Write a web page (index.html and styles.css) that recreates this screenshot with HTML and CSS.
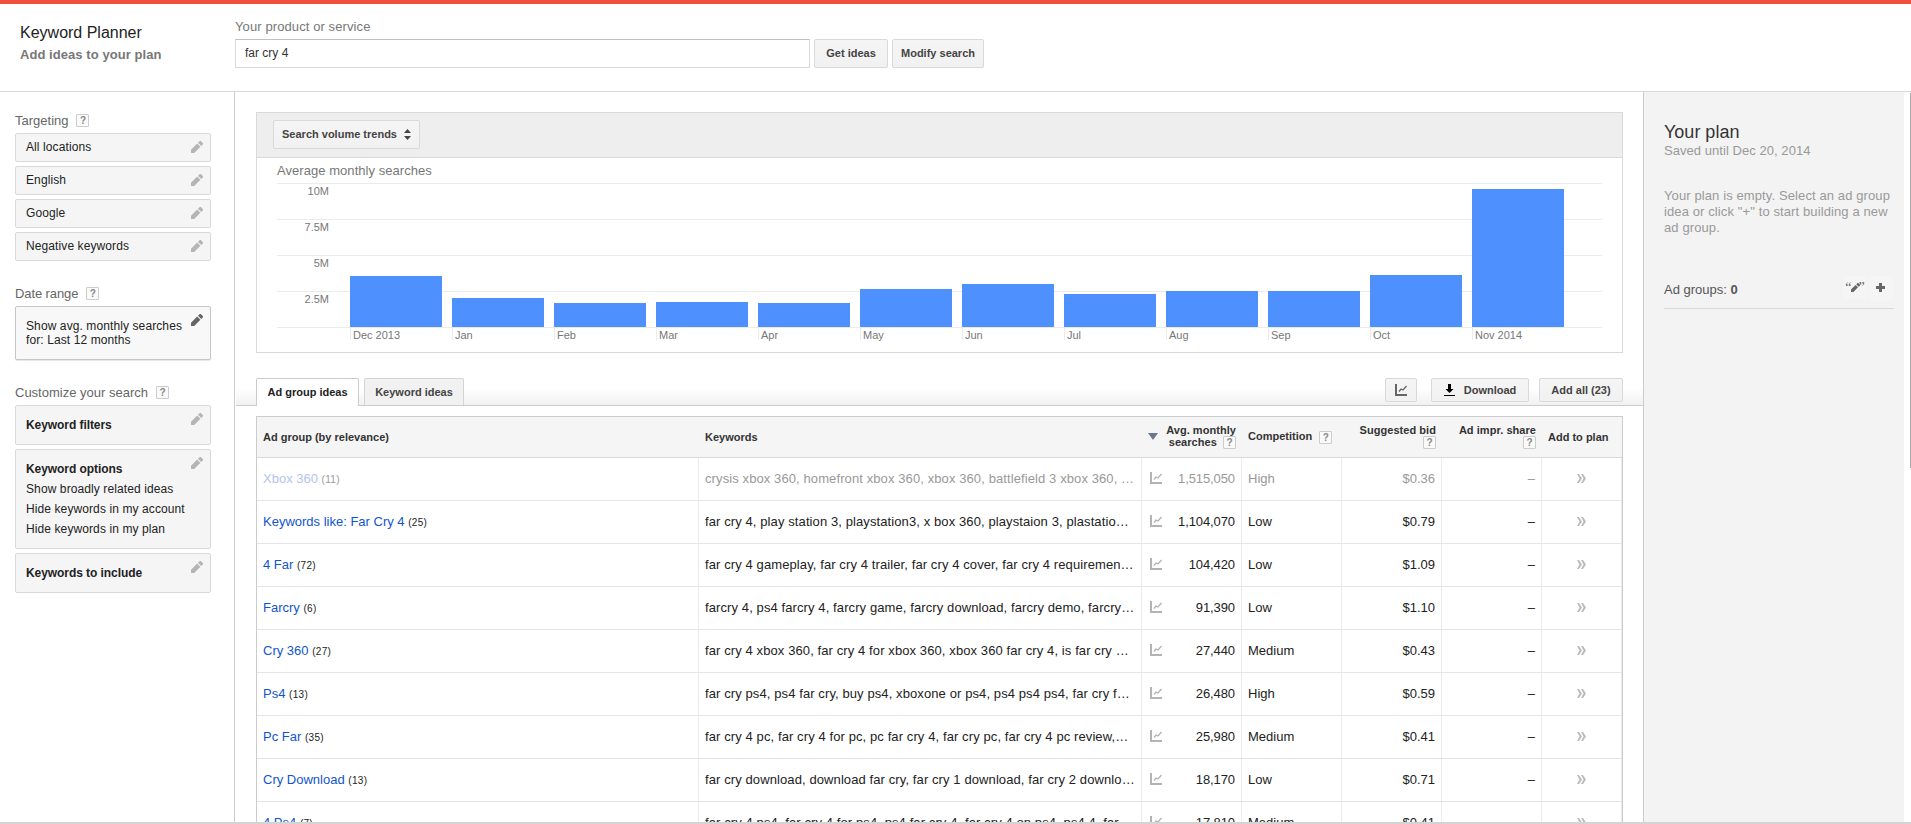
FILE: index.html
```html
<!DOCTYPE html>
<html lang="en">
<head>
    <meta charset="UTF-8">
    <meta name="viewport" content="width=device-width, initial-scale=1.0">
    <title>Keyword Planner</title>
    <link rel="stylesheet" href="styles.css">
</head>
<body>
    <svg class="sprite" xmlns="http://www.w3.org/2000/svg">
        <symbol id="pencil" viewBox="0 0 12 12">
            <path d="M0 12V8.800L6.200 2.600l3.200 3.200L3.200 12zM7 1.800L8.800 0h1L12 2.200v1L10.200 5z"/>
        </symbol>
        <symbol id="chart" viewBox="0 0 12 12">
            <path d="M0 0h2v10h10v2H0z"/>
            <path d="M4 7.5l2-2.5 2 1 3.5-4" fill="none" stroke="currentColor" stroke-width="1.3"/>
        </symbol>
        <symbol id="chevrons" viewBox="0 0 9 9">
            <path d="M0 0h2l3 4.5L2 9H0l2.5-4.5zM4 0h2l3 4.5L6 9H4l2.5-4.5z"/>
        </symbol>
    </svg>

    <header class="header">
        <div class="title">
            <h1>Keyword Planner</h1>
            <h2>Add ideas to your plan</h2>
        </div>
        <div class="search">
            <label for="product">Your product or service</label>
            <div class="search-row">
                <input type="text" id="product" value="far cry 4">
                <button class="button get-ideas">Get ideas</button>
                <button class="button modify">Modify search</button>
            </div>
        </div>
    </header>

    <div class="page">
        <aside class="sidebar">
            <h3>Targeting <span class="help">?</span></h3>
            <div class="option">All locations<svg class="pencil"><use href="#pencil"/></svg></div>
            <div class="option">English<svg class="pencil"><use href="#pencil"/></svg></div>
            <div class="option">Google<svg class="pencil"><use href="#pencil"/></svg></div>
            <div class="option">Negative keywords<svg class="pencil"><use href="#pencil"/></svg></div>

            <h3 class="date">Date range <span class="help">?</span></h3>
            <div class="option option-date">Show avg. monthly searches<br>for: Last 12 months<svg class="pencil"><use href="#pencil"/></svg></div>

            <h3>Customize your search <span class="help">?</span></h3>
            <div class="option option-big"><b>Keyword filters</b><svg class="pencil"><use href="#pencil"/></svg></div>
            <div class="option option-big">
                <b>Keyword options</b>
                <p>Show broadly related ideas</p>
                <p>Hide keywords in my account</p>
                <p>Hide keywords in my plan</p>
                <svg class="pencil"><use href="#pencil"/></svg>
            </div>
            <div class="option option-big"><b>Keywords to include</b><svg class="pencil"><use href="#pencil"/></svg></div>
        </aside>

        <main class="main">
            <section class="trends">
                <div class="trends-bar">
                    <button class="button trends-select">Search volume trends
                        <svg width="7" height="11" viewBox="0 0 7 11"><path d="M0 4l3.5-4L7 4zM0 7l3.5 4L7 7z" fill="#444"/></svg>
                    </button>
                </div>
                <h4>Average monthly searches</h4>
                <div class="chart">
                    <div class="grid">
                        <span>10M</span>
                        <span>7.5M</span>
                        <span>5M</span>
                        <span>2.5M</span>
                    </div>
                    <div class="bars" id="bars"></div>
                </div>
            </section>

            <div class="tabs">
                <div class="tab tab-active">Ad group ideas</div>
                <div class="tab">Keyword ideas</div>
                <div class="actions">
                    <button class="button chart-button"><svg width="12" height="12"><use href="#chart"/></svg></button>
                    <button class="button download">
                        <svg width="11" height="12" viewBox="0 0 11 12"><path d="M4 0h3v5h2.500L5.500 9 1.500 5H4zM0 11h11v1H0z"/></svg>
                        Download
                    </button>
                    <button class="button add-all">Add all (23)</button>
                </div>
            </div>

            <table class="ideas">
                <thead>
                    <tr>
                        <th class="col-group">Ad group (by relevance)</th>
                        <th class="col-keywords">Keywords</th>
                        <th class="col-num sorted"><div class="two-line"><i class="sort"></i>Avg. monthly<br>searches <span class="help">?</span></div></th>
                        <th class="col-num competition">Competition <span class="help">?</span></th>
                        <th class="col-num right"><div class="two-line">Suggested bid<br><span class="help">?</span></div></th>
                        <th class="col-num right"><div class="two-line">Ad impr. share<br><span class="help">?</span></div></th>
                        <th class="col-add">Add to plan</th>
                    </tr>
                </thead>
                <tbody id="rows"></tbody>
            </table>
        </main>

        <aside class="plan">
            <h2>Your plan</h2>
            <p class="saved">Saved until Dec 20, 2014</p>
            <p class="empty">Your plan is empty. Select an ad group idea or click "+" to start building a new ad group.</p>
            <div class="plan-groups">
                <span>Ad groups: <b>0</b></span>
                <div class="plan-icons">
                    <i class="quote-edit">“<svg width="9" height="9"><use href="#pencil"/></svg>”</i>
                    <i class="plus"><svg width="9" height="9" viewBox="0 0 9 9"><path d="M3 0h3v3h3v3H6v3H3V6H0V3h3z"/></svg></i>
                </div>
            </div>
        </aside>
        <div class="scroll"></div>
    </div>

    <script>
        // monthly volume in px of the 144px tall plot
        const months = [
            ['Dec 2013', 51], ['Jan', 29], ['Feb', 24], ['Mar', 25], ['Apr', 24], ['May', 38],
            ['Jun', 43], ['Jul', 33], ['Aug', 36], ['Sep', 36], ['Oct', 52], ['Nov 2014', 138]
        ];

        const ideas = [
            ['Xbox 360', 11, 'crysis xbox 360, homefront xbox 360, xbox 360, battlefield 3 xbox 360, …', '1,515,050', 'High', '$0.36'],
            ['Keywords like: Far Cry 4', 25, 'far cry 4, play station 3, playstation3, x box 360, playstaion 3, plastatio…', '1,104,070', 'Low', '$0.79'],
            ['4 Far', 72, 'far cry 4 gameplay, far cry 4 trailer, far cry 4 cover, far cry 4 requiremen…', '104,420', 'Low', '$1.09'],
            ['Farcry', 6, 'farcry 4, ps4 farcry 4, farcry game, farcry download, farcry demo, farcry…', '91,390', 'Low', '$1.10'],
            ['Cry 360', 27, 'far cry 4 xbox 360, far cry 4 for xbox 360, xbox 360 far cry 4, is far cry …', '27,440', 'Medium', '$0.43'],
            ['Ps4', 13, 'far cry ps4, ps4 far cry, buy ps4, xboxone or ps4, ps4 ps4 ps4, far cry f…', '26,480', 'High', '$0.59'],
            ['Pc Far', 35, 'far cry 4 pc, far cry 4 for pc, pc far cry 4, far cry pc, far cry 4 pc review,…', '25,980', 'Medium', '$0.41'],
            ['Cry Download', 13, 'far cry download, download far cry, far cry 1 download, far cry 2 downlo…', '18,170', 'Low', '$0.71'],
            ['4 Ps4', 7, 'far cry 4 ps4, far cry 4 for ps4, ps4 far cry 4, far cry 4 on ps4, ps4 4, far…', '17,810', 'Medium', '$0.41']
        ];

        document.getElementById('bars').innerHTML = months.map(m =>
            `<div class="month"><div class="bar" style="height:${m[1]}px"></div><span>${m[0]}</span></div>`
        ).join('');

        document.getElementById('rows').innerHTML = ideas.map((r, i) => `
            <tr class="${i === 0 ? 'used' : ''}">
                <td><a>${r[0]}</a> <small>(${r[1]})</small></td>
                <td class="words">${r[2]}</td>
                <td><div class="volume"><svg width="12" height="12"><use href="#chart"/></svg>${r[3]}</div></td>
                <td>${r[4]}</td>
                <td class="right">${r[5]}</td>
                <td class="right">–</td>
                <td class="add"><svg width="9" height="9"><use href="#chevrons"/></svg></td>
            </tr>`
        ).join('');
    </script>
</body>
</html>
```
FILE: styles.css
```css
* {
    box-sizing: border-box;
}
body {
    margin: 0;
    height: 824px;
    overflow: hidden;
    display: flex;
    flex-direction: column;
    background-color: #fff;
    color: #222;
    font-family: Arial, "Liberation Sans", sans-serif;
    font-size: 13px;
    border-bottom: 2px solid #d4d4d4;
}
h1, h2, h3, h4, p {
    margin: 0;
    font-weight: normal;
}
.sprite {
    display: none;
}
svg {
    fill: currentColor;
}
.header {
    display: flex;
    flex: none;
    height: 92px;
    border-top: 4px solid #f1503e;
    border-bottom: 1px solid #d9d9d9;
}
.title {
    width: 235px;
    padding: 19px 0 0 20px;
}
.title h1 {
    font-size: 16px;
    line-height: 20px;
}
.title h2 {
    margin-top: 4px;
    font-size: 13px;
    line-height: 16px;
    font-weight: bold;
    color: #777;
    letter-spacing: 0.06px;
}
.search label {
    display: block;
    padding-top: 15px;
    line-height: 16px;
    color: #777;
    letter-spacing: 0.1px;
}
.search-row {
    display: flex;
    gap: 4px;
    margin-top: 4px;
}
.search-row input {
    width: 575px;
    height: 29px;
    padding: 0 9px 2px;
    border: 1px solid #d9d9d9;
    border-top-color: #c0c0c0;
    color: #333;
    font: 12px Arial, "Liberation Sans", sans-serif;
}
.button {
    display: flex;
    align-items: center;
    justify-content: center;
    height: 29px;
    padding: 0;
    border: 1px solid #d9d9d9;
    border-radius: 2px;
    background-image: linear-gradient(#f5f5f5, #f1f1f1);
    color: #444;
    font: bold 11px Arial, "Liberation Sans", sans-serif;
}
.get-ideas {
    width: 74px;
    padding-bottom: 1px;
}
.modify {
    width: 92px;
    padding-bottom: 1px;
}
.page {
    display: flex;
    flex: 1;
    min-height: 0;
}

/* left column */
.sidebar {
    width: 235px;
    padding: 19px 23px 0 15px;
    border-right: 1px solid #ccc;
}
.sidebar h3 {
    display: flex;
    align-items: center;
    height: 18px;
    margin: 23px 0 4px;
    font-size: 13px;
    color: #666;
}
.sidebar h3:first-child {
    margin-top: 0;
}
.sidebar h3.date {
    letter-spacing: -0.1px;
}
.help {
    display: inline-block;
    width: 13px;
    height: 13px;
    margin-left: 8px;
    border: 1px solid #ccc;
    border-radius: 1px;
    background-color: #fafafa;
    color: #888;
    font-size: 10px;
    font-weight: bold;
    line-height: 11px;
    text-align: center;
}
.option {
    position: relative;
    height: 29px;
    margin-bottom: 4px;
    padding: 6px 10px;
    border: 1px solid #d9d9d9;
    border-radius: 2px;
    background-color: #f5f5f5;
    font-size: 12px;
    line-height: 14px;
    letter-spacing: 0.1px;
}
.pencil {
    position: absolute;
    top: 7px;
    right: 7px;
    width: 12px;
    height: 12px;
    color: #b5b5b5;
}
.option-date {
    height: 54px;
    margin-bottom: 0;
    padding-top: 12px;
    border-color: #c6c6c6;
    background-color: #f8f8f8;
    box-shadow: 0 1px 1px rgba(0, 0, 0, 0.1);
}
.option-date .pencil {
    color: #666;
}
.option-big {
    height: auto;
    padding: 9px 10px;
    line-height: 20px;
}
.option-big b {
    display: block;
    letter-spacing: -0.07px;
}

/* middle */
.main {
    width: 1408px;
    overflow: hidden;
}
.trends {
    height: 241px;
    margin: 20px 20px 0 21px;
    border: 1px solid #d9d9d9;
}
.trends-bar {
    height: 45px;
    padding: 7px 16px;
    border-bottom: 1px solid #d9d9d9;
    background-color: #eee;
}
.trends-select {
    width: 147px;
    padding-bottom: 1px;
    gap: 7px;
}
.trends h4 {
    margin-left: 20px;
    padding-top: 5px;
    height: 25px;
    font-size: 13px;
    line-height: 16px;
    color: #777;
    letter-spacing: 0.05px;
}
.chart {
    position: relative;
    width: 1325px;
    height: 157px;
    margin-left: 20px;
}
.grid {
    height: 145px;
    border-bottom: 1px solid #ebebeb;
}
.grid span {
    display: block;
    height: 36px;
    padding: 1px 1273px 0 0;
    border-top: 1px solid #ebebeb;
    color: #777;
    font-size: 11px;
    line-height: 13px;
    text-align: right;
}
.bars {
    position: absolute;
    top: 0;
    left: 73px;
    display: flex;
    gap: 10px;
    height: 157px;
}
.month {
    display: flex;
    flex-direction: column;
    justify-content: flex-end;
    width: 92px;
}
.bar {
    background-color: #4d90fe;
}
.month span {
    height: 12px;
    margin-top: 1px;
    padding-left: 2px;
    border-left: 1px solid #ebebeb;
    color: #777;
    font-size: 11px;
    line-height: 14px;
    white-space: nowrap;
}
.tabs {
    display: flex;
    height: 43px;
    margin: 10px 0 0 1px;
    padding: 15px 20px 0 20px;
    border-bottom: 1px solid #ccc;
    background-image: linear-gradient(#fff 60%, #f1f1f1);
}
.tab {
    width: 100px;
    height: 27px;
    margin-right: 5px;
    border: 1px solid #d4d4d4;
    border-bottom: 0;
    border-radius: 2px 2px 0 0;
    background-color: #f1f1f1;
    color: #444;
    font-size: 11px;
    font-weight: bold;
    line-height: 27px;
    text-align: center;
}
.tab-active {
    width: 103px;
    height: 28px;
    border-color: #ccc;
    background-color: #fff;
    color: #222;
}
.actions {
    display: flex;
    margin-left: auto;
}
.actions .button {
    height: 24px;
}
.chart-button {
    width: 32px;
    margin-right: 14px;
    color: #666;
}
.download {
    width: 98px;
    margin-right: 10px;
    gap: 9px;
}
.download svg {
    fill: #000;
}
.add-all {
    width: 84px;
}

/* results */
.ideas {
    width: 1367px;
    margin: 10px 0 0 21px;
    border: 1px solid #ccc;
    border-collapse: separate;
    border-spacing: 0;
    table-layout: fixed;
}
.ideas th {
    height: 41px;
    padding: 0 6px;
    border-bottom: 1px solid #d9d9d9;
    background-color: #f5f5f5;
    color: #333;
    font-size: 11px;
    text-align: left;
    white-space: nowrap;
}
.ideas td {
    height: 43px;
    padding: 0 6px 2px;
    border-right: 1px solid #ebebeb;
    border-bottom: 1px solid #e5e5e5;
    white-space: nowrap;
}
.ideas a {
    color: #15c;
}
.ideas small {
    font-size: 10px;
    letter-spacing: 0.3px;
}
.words {
    letter-spacing: 0.1px;
}
.col-group {
    width: 442px;
}
.col-keywords {
    width: 443px;
}
.col-num {
    width: 100px;
}
.col-add {
    width: 80px;
}
.ideas .right, .ideas .sorted {
    text-align: right;
}
.two-line {
    position: relative;
    line-height: 12px;
    height: 26px;
    letter-spacing: 0.05px;
}
.ideas .help {
    margin-left: 3px;
    vertical-align: top;
    letter-spacing: 0;
}
.ideas .competition .help {
    margin-left: 4px;
    vertical-align: middle;
}
.sort {
    position: absolute;
    left: 0;
    top: 9px;
    border: 5px solid transparent;
    border-top: 7px solid #6b778d;
    border-bottom: 0;
}
.volume {
    display: flex;
    align-items: center;
    justify-content: space-between;
    padding-left: 2px;
    letter-spacing: -0.1px;
}
.volume svg {
    color: #b3b3b3;
}
.used td {
    color: #999;
}
.used a {
    color: #b4c3ee;
}
.ideas .add {
    text-align: center;
    color: #bbb;
}

/* right column */
.plan {
    width: 261px;
    padding: 29px 10px 0 20px;
    border-left: 1px solid #ccc;
    background-color: #f3f3f3;
    color: #999;
    line-height: 16px;
}
.plan h2 {
    font-size: 18px;
    line-height: 22px;
    color: #333;
}
.saved {
    letter-spacing: 0.05px;
}
.empty {
    margin: 29px -4px 0 0;
    letter-spacing: 0.11px;
}
.plan-groups {
    display: flex;
    height: 33px;
    margin-top: 40px;
    border-bottom: 1px solid #d9d9d9;
    color: #555;
}
.plan-groups span {
    padding-top: 6px;
}
.plan-icons {
    display: flex;
    gap: 2px;
    margin: 0 1px 0 auto;
    color: #666;
}
.plan-icons i {
    display: flex;
    align-items: center;
    justify-content: center;
    width: 24px;
    height: 23px;
    background-color: #f5f5f5;
    font: 14px "Liberation Serif", serif;
}
.quote-edit svg {
    margin: 0 -1px;
}
.plan-icons .plus {
    height: 25px;
    padding: 0 2px 2px 0;
}
.scroll {
    width: 1px;
    height: 375px;
    margin: 1px 0 0 auto;
    background-color: #aaa;
}
```
